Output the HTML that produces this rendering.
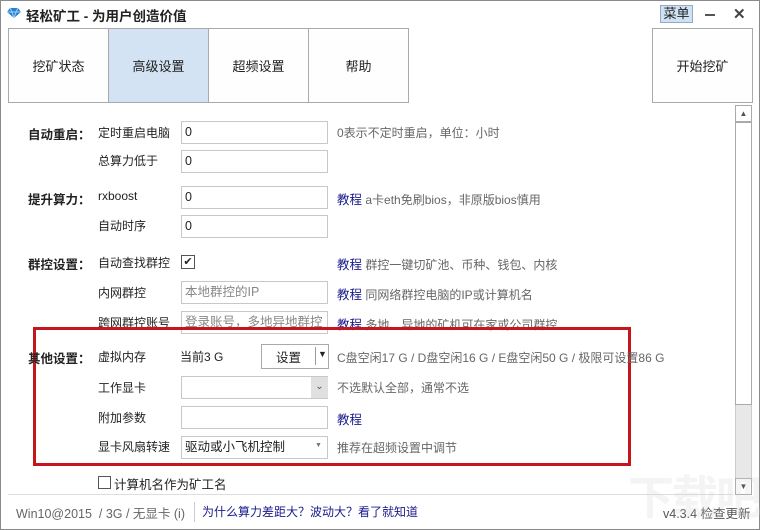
<!DOCTYPE html>
<html><head><meta charset="utf-8"><style>
*{margin:0;padding:0;box-sizing:border-box}
body{width:760px;height:530px;background:#fff;position:relative;overflow:hidden;font-family:"Liberation Sans","Noto Sans CJK SC","Microsoft YaHei",sans-serif;font-size:12px;color:#222}
.a{position:absolute;white-space:nowrap}
.win{position:absolute;left:0;top:0;width:760px;height:530px;border:1px solid #8a8a8a}
.tab{position:absolute;top:28px;height:75px;width:101px;border:1px solid #aaa;background:#fefefe;display:flex;align-items:center;justify-content:center;font-size:13px;color:#222}
.inp{position:absolute;left:181px;width:147px;height:23px;border:1px solid #c8c8c8;background:#fff;padding:2px 3px;font-size:12.5px;line-height:17px;overflow:hidden;white-space:nowrap}
.ph{color:#888}
.l1{position:absolute;left:28px;font-weight:bold;font-size:12.5px;white-space:nowrap}
.l2{position:absolute;left:98px;font-size:12px;white-space:nowrap}
.n{position:absolute;left:337px;font-size:12px;color:#666;white-space:nowrap}
.n b{font-weight:normal;color:#1a1a8c;font-size:12.5px}
</style></head><body>
<div class="win"></div>
<svg class="a" style="left:6px;top:7px" width="16" height="12" viewBox="0 0 16 12"><path d="M1 5 L4 1 H12 L15 5 L8 11 Z" fill="#2a7fd0"/><path d="M1 5 H15 M4 1 L6 5 L8 11 M12 1 L10 5 L8 11" stroke="#9fd0f5" stroke-width="1" fill="none"/></svg>
<div class="a" style="left:26px;top:5px;font-weight:bold;font-size:13.5px">轻松矿工 - 为用户创造价值</div>
<div class="a" style="left:660px;top:5px;width:33px;height:18px;background:#cfe2f5;border:1px solid #9ab;font-size:13px;text-align:center;line-height:16px">菜单</div>
<div class="a" style="left:705px;top:14px;width:10px;height:2px;background:#555"></div>
<div class="a" style="left:733px;top:5px;font-size:15px;color:#444;font-weight:bold">✕</div>
<div class="tab" style="left:8px">挖矿状态</div>
<div class="tab" style="left:108px;background:#d3e3f4">高级设置</div>
<div class="tab" style="left:208px">超频设置</div>
<div class="tab" style="left:308px">帮助</div>
<div class="tab" style="left:652px">开始挖矿</div>
<div class="a" style="left:735px;top:105px;width:17px;height:390px;background:#e8e8e8;border:1px solid #ccc"></div>
<div class="a" style="left:735px;top:105px;width:17px;height:17px;background:#fff;border:1px solid #aaa;font-size:8px;text-align:center;line-height:15px;color:#555">▲</div>
<div class="a" style="left:735px;top:122px;width:17px;height:283px;background:#fff;border:1px solid #aaa"></div>
<div class="a" style="left:735px;top:478px;width:17px;height:17px;background:#fff;border:1px solid #aaa;font-size:8px;text-align:center;line-height:15px;color:#555">▼</div>
<div class="l1" style="top:124px">自动重启：</div>
<div class="l2" style="top:124px">定时重启电脑</div>
<div class="inp" style="top:121px">0</div>
<div class="n" style="top:124px">0表示不定时重启，单位：小时</div>
<div class="l2" style="top:152px">总算力低于</div>
<div class="inp" style="top:150px">0</div>
<div class="l1" style="top:189px">提升算力：</div>
<div class="l2" style="top:189px">rxboost</div>
<div class="inp" style="top:186px">0</div>
<div class="n" style="top:189px"><b>教程</b> a卡eth免刷bios，非原版bios慎用</div>
<div class="l2" style="top:217px">自动时序</div>
<div class="inp" style="top:215px">0</div>
<div class="l1" style="top:254px">群控设置：</div>
<div class="l2" style="top:254px">自动查找群控</div>
<div class="a" style="left:181px;top:255px;width:14px;height:14px;border:1px solid #555;font-size:11px;line-height:12px;text-align:center">✔</div>
<div class="n" style="top:254px"><b>教程</b> 群控一键切矿池、币种、钱包、内核</div>
<div class="l2" style="top:284px">内网群控</div>
<div class="inp ph" style="top:281px">本地群控的IP</div>
<div class="n" style="top:284px"><b>教程</b> 同网络群控电脑的IP或计算机名</div>
<div class="l2" style="top:314px">跨网群控账号</div>
<div class="inp ph" style="top:311px">登录账号，多地异地群控</div>
<div class="n" style="top:314px"><b>教程</b> 多地、异地的矿机可在家或公司群控</div>
<div class="a" style="left:33px;top:327px;width:598px;height:139px;border:3px solid #c4161c"></div>
<div class="l1" style="top:348px">其他设置：</div>
<div class="l2" style="top:348px">虚拟内存</div>
<div class="a" style="left:180px;top:348px">当前3 G</div>
<div class="a" style="left:261px;top:344px;width:68px;height:25px;border:1px solid #aaa;background:#fff"></div>
<div class="a" style="left:276px;top:347px;font-size:12.5px">设置</div>
<div class="a" style="left:315px;top:347px;width:1px;height:18px;background:#999"></div>
<div class="a" style="left:318px;top:349px;font-size:9px">▼</div>
<div class="n" style="top:349px">C盘空闲17 G / D盘空闲16 G / E盘空闲50 G / 极限可设置86 G</div>
<div class="l2" style="top:379px">工作显卡</div>
<div class="inp" style="top:376px;height:23px"></div>
<div class="a" style="left:311px;top:377px;width:17px;height:21px;background:#e0e0e0;font-size:10px;text-align:center;line-height:20px;color:#555">⌄</div>
<div class="n" style="top:379px">不选默认全部，通常不选</div>
<div class="l2" style="top:409px">附加参数</div>
<div class="inp" style="top:406px"></div>
<div class="n" style="top:409px"><b>教程</b></div>
<div class="l2" style="top:438px">显卡风扇转速</div>
<div class="inp" style="top:436px">驱动或小飞机控制</div>
<div class="a" style="left:315px;top:442px;font-size:7px;color:#777">▼</div>
<div class="n" style="top:439px">推荐在超频设置中调节</div>
<div class="a" style="left:98px;top:476px;width:13px;height:13px;border:1px solid #555"></div>
<div class="a" style="left:114px;top:474px;font-size:12.5px">计算机名作为矿工名</div>
<div class="a" style="left:8px;top:494px;width:725px;height:1px;background:#ddd"></div>
<div class="a" style="left:16px;top:503px;color:#666;font-size:12.5px">Win10@2015 &nbsp;/ 3G / 无显卡 (i)</div>
<div class="a" style="left:194px;top:502px;width:1px;height:20px;background:#ccc"></div>
<div class="a" style="left:202px;top:503px;color:#1a1a8c;font-size:12px">为什么算力差距大？波动大？看了就知道</div>
<div class="a" style="left:663px;top:503px;color:#555;font-size:12.5px">v4.3.4 检查更新</div>
<div class="a" style="left:628px;top:462px;font-size:46px;color:rgba(210,210,210,0.25);font-weight:bold;letter-spacing:-2px">下载吧</div>
</body></html>
